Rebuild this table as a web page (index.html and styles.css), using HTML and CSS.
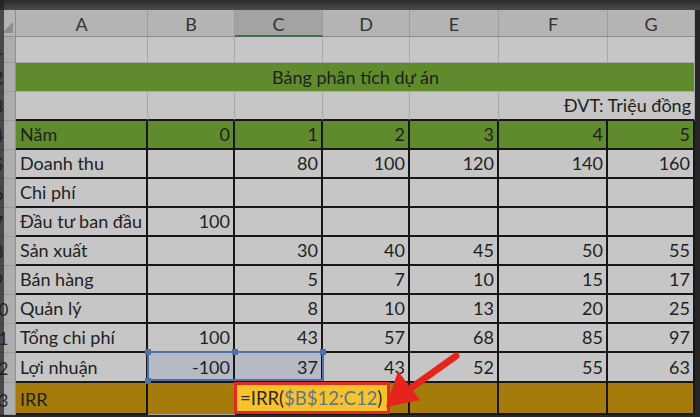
FILE: index.html
```html
<!DOCTYPE html>
<html lang="vi">
<head>
<meta charset="utf-8">
<title>Bảng phân tích dự án</title>
<link rel="stylesheet" href="styles.css">
</head>
<body>
<div class="frame">
  <div class="topbar"></div>
  <div class="sheet">
    <!-- column headers -->
    <div class="corner"><span class="tri"></span></div>
    <div class="ch">A</div>
    <div class="ch">B</div>
    <div class="ch sel">C</div>
    <div class="ch">D</div>
    <div class="ch">E</div>
    <div class="ch">F</div>
    <div class="ch">G</div>

    <!-- row 1 -->
    <div class="rh r1">1</div>
    <div class="c"></div><div class="c"></div><div class="c"></div><div class="c"></div><div class="c"></div><div class="c"></div><div class="c"></div>

    <!-- row 2 -->
    <div class="rh">2</div>
    <div class="c green title">Bảng phân tích dự án</div>

    <!-- row 3 -->
    <div class="rh">3</div>
    <div class="c top"></div><div class="c top"></div><div class="c top"></div><div class="c top"></div><div class="c top"></div>
    <div class="c top num span2">ĐVT: Triệu đồng</div>

    <!-- row 4 -->
    <div class="rh">4</div>
    <div class="c t green">Năm</div>
    <div class="c t green num">0</div>
    <div class="c t green num">1</div>
    <div class="c t green num">2</div>
    <div class="c t green num">3</div>
    <div class="c t green num">4</div>
    <div class="c t green num">5</div>

    <!-- row 5 -->
    <div class="rh">5</div>
    <div class="c t">Doanh thu</div>
    <div class="c t num"></div>
    <div class="c t num">80</div>
    <div class="c t num">100</div>
    <div class="c t num">120</div>
    <div class="c t num">140</div>
    <div class="c t num">160</div>

    <!-- row 6 -->
    <div class="rh">6</div>
    <div class="c t">Chi phí</div>
    <div class="c t"></div><div class="c t"></div><div class="c t"></div><div class="c t"></div><div class="c t"></div><div class="c t"></div>

    <!-- row 7 -->
    <div class="rh">7</div>
    <div class="c t">Đầu tư ban đầu</div>
    <div class="c t num">100</div>
    <div class="c t"></div><div class="c t"></div><div class="c t"></div><div class="c t"></div><div class="c t"></div>

    <!-- row 8 -->
    <div class="rh">8</div>
    <div class="c t">Sản xuất</div>
    <div class="c t num"></div>
    <div class="c t num">30</div>
    <div class="c t num">40</div>
    <div class="c t num">45</div>
    <div class="c t num">50</div>
    <div class="c t num">55</div>

    <!-- row 9 -->
    <div class="rh">9</div>
    <div class="c t">Bán hàng</div>
    <div class="c t num"></div>
    <div class="c t num">5</div>
    <div class="c t num">7</div>
    <div class="c t num">10</div>
    <div class="c t num">15</div>
    <div class="c t num">17</div>

    <!-- row 10 -->
    <div class="rh">10</div>
    <div class="c t">Quản lý</div>
    <div class="c t num"></div>
    <div class="c t num">8</div>
    <div class="c t num">10</div>
    <div class="c t num">13</div>
    <div class="c t num">20</div>
    <div class="c t num">25</div>

    <!-- row 11 -->
    <div class="rh">11</div>
    <div class="c t">Tổng chi phí</div>
    <div class="c t num">100</div>
    <div class="c t num">43</div>
    <div class="c t num">57</div>
    <div class="c t num">68</div>
    <div class="c t num">85</div>
    <div class="c t num">97</div>

    <!-- row 12 -->
    <div class="rh">12</div>
    <div class="c t">Lợi nhuận</div>
    <div class="c t num picked anchor">-100
      <div class="range">
        <span class="h h-tl"></span><span class="h h-tm"></span><span class="h h-tr"></span><span class="h h-bl"></span>
      </div>
    </div>
    <div class="c t num picked">37</div>
    <div class="c t num">43</div>
    <div class="c t num">52</div>
    <div class="c t num">55</div>
    <div class="c t num">63</div>

    <!-- row 13 -->
    <div class="rh">13</div>
    <div class="c t gold">IRR</div>
    <div class="c gold"></div>
    <div class="c t gold editing">
      <div class="formula">=IRR(<span class="ref">$B$12:C12</span>)</div>
    </div>
    <div class="c t gold"></div>
    <div class="c t gold"></div>
    <div class="c t gold"></div>
    <div class="c t gold"></div>
  </div>

  <svg class="arrow" width="700" height="417" viewBox="0 0 700 417" aria-hidden="true">
    <line x1="456" y1="356" x2="404" y2="393" stroke="#e6231c" stroke-width="7" stroke-linecap="round"/>
    <polygon points="386,407 398,371 420,400" fill="#e6231c"/>
  </svg>
  <div class="leftshade"></div>
</div>
</body>
</html>
```

FILE: styles.css
```css
* { box-sizing: border-box; }

html, body {
  margin: 0;
  padding: 0;
}

body {
  width: 700px;
  height: 417px;
  overflow: hidden;
  background: #262626;
  font-family: Lato, "Open Sans", "Liberation Sans", sans-serif;
  color: #1f1f1f;
}

.frame {
  position: relative;
  width: 700px;
  height: 417px;
  overflow: hidden;
}

.topbar {
  height: 10px;
  background: linear-gradient(#2c2c2c, #4a4a4a);
}

.sheet {
  display: grid;
  margin-left: -18px;
  grid-template-columns: 34px 132px 87px 88px 87px 89px 109px 87px;
  grid-template-rows: 27px 26px 29px 29px 29px 29px 29px 29px 29px 29px 29px 29px 30px 32px;
  width: 713px;
  border-bottom: 2px solid #2a2a2a;
}

/* column headers */
.corner {
  position: relative;
  background: #b3b3b3;
  border-right: 1px solid #8e8e8e;
  border-bottom: 1px solid #8e8e8e;
}
.tri {
  position: absolute;
  right: 2px;
  bottom: 3px;
  width: 0;
  height: 0;
  border-left: 11px solid transparent;
  border-bottom: 11px solid #8d8d8d;
}

.ch {
  display: flex;
  align-items: center;
  justify-content: center;
  background: #b4b4b4;
  border-right: 1px solid #9c9c9c;
  border-bottom: 1px solid #8c8c8c;
  font-size: 18px;
  color: #333;
  padding-top: 2px;
}
.ch.sel {
  background: #a3a3a3;
  border-bottom: 2px solid #3e6e52;
}

/* row headers */
.rh {
  display: flex;
  align-items: flex-end;
  justify-content: center;
  padding-bottom: 3px;
  background: #adadad;
  border-right: 1px solid #8e8e8e;
  border-bottom: 1px solid #999;
  font-size: 17px;
  color: #2a2a2a;
}

/* cells */
.c {
  display: flex;
  align-items: flex-end;
  padding: 0 3px 2px 4px;
  background: #c6c6c6;
  border-right: 1px solid #a9a9a9;
  border-bottom: 1px solid #a9a9a9;
  font-size: 18px;
  line-height: 24px;
  white-space: nowrap;
  min-width: 0;
}

.num { justify-content: flex-end; }

.green { background: #5f8b2c; }
.gold { background: #a57b0c; }

.title {
  grid-column: span 7;
  justify-content: center;
}

.span2 { grid-column: span 2; }

.top { border-bottom: 2px solid #171717; }

.t {
  border-right: 2px solid #171717;
  border-bottom: 2px solid #171717;
}

/* selected range B12:C12 */
.picked { background: #b6bac5; }
.anchor { position: relative; }
.range {
  position: absolute;
  left: -1px;
  top: -2px;
  width: 177px;
  height: 30px;
  border: 2px solid #4f6fa6;
  pointer-events: none;
}
.h {
  position: absolute;
  width: 6px;
  height: 6px;
  background: #4f6fa6;
}
.h-tl { left: -4px; top: -4px; }
.h-tm { left: 83px; top: -4px; }
.h-tr { right: -4px; top: -4px; }
.h-bl { left: -4px; bottom: -5px; }

/* cell in edit mode */
.editing {
  position: relative;
  overflow: visible;
}
.formula {
  position: absolute;
  left: -1px;
  top: -1px;
  z-index: 2;
  height: 32px;
  padding: 0 5px 0 3px;
  display: flex;
  align-items: center;
  background: #f8c22b;
  border: 3px solid #e32a1d;
  font-size: 18.5px;
  color: #2a2a2a;
  white-space: nowrap;
}
.ref { color: #5c7691; }

.arrow {
  position: absolute;
  left: 0;
  top: 0;
  z-index: 3;
  pointer-events: none;
}

.leftshade {
  position: absolute;
  left: 0;
  top: 0;
  width: 4px;
  height: 417px;
  background: rgba(30, 30, 30, 0.7);
  pointer-events: none;
}
```
